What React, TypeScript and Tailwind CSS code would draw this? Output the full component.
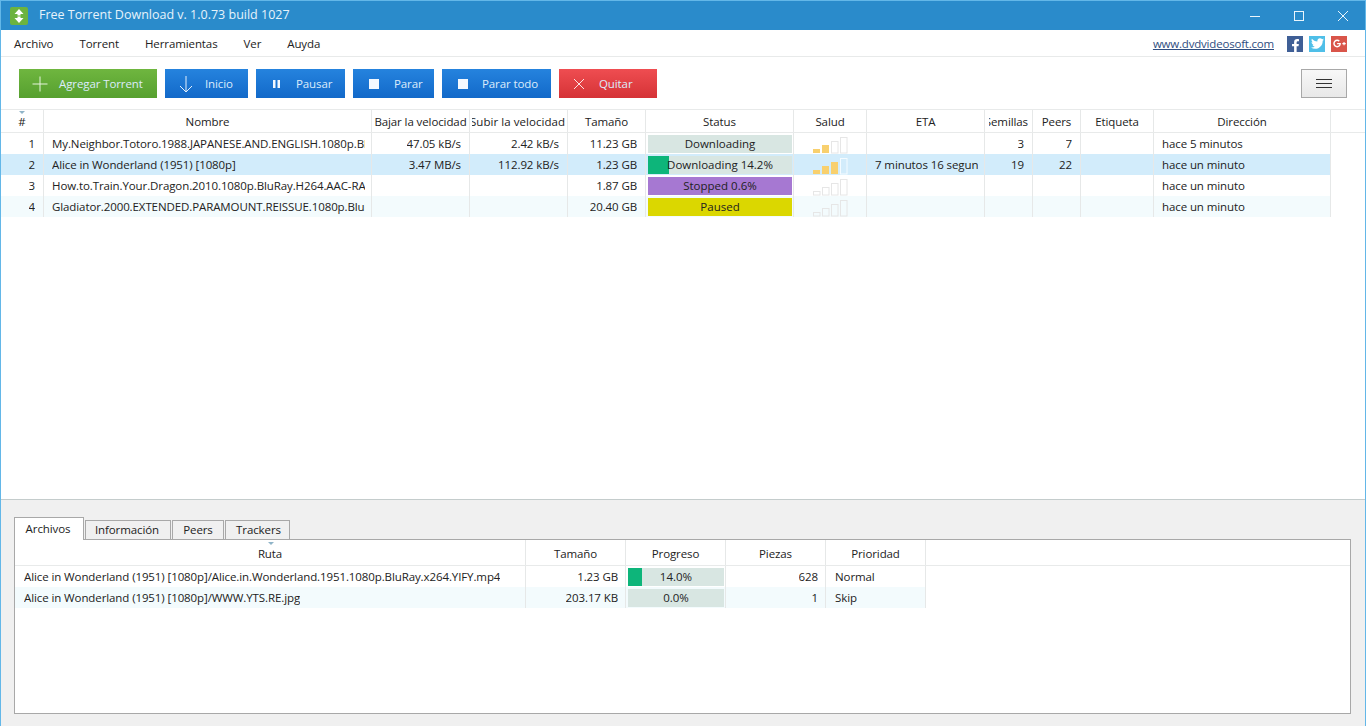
import React from "react";
import { FaFacebookF, FaTwitter, FaGooglePlusG } from "react-icons/fa";

const cols = "grid grid-cols-[43px_328px_98px_98px_78px_148px_73px_118px_48px_48px_73px_177px_1fr]";
const fileCols = "grid grid-cols-[511px_100px_100px_100px_100px_1fr]";

const Sep = "border-r border-[#e6e8e8]";

function H({ children, last }: { children?: React.ReactNode; last?: boolean }) {
  return (
    <div className={`flex justify-center items-center overflow-hidden whitespace-nowrap pt-px ${last ? "" : Sep}`}>
      {children}
    </div>
  );
}

function C({ children, right }: { children?: React.ReactNode; right?: boolean }) {
  return (
    <div className={`flex items-center overflow-hidden whitespace-nowrap ${Sep} ${right ? "justify-end pr-2" : "pl-2 pr-1.5"}`}>
      <span className="block overflow-hidden">{children}</span>
    </div>
  );
}

function F({ children, right }: { children?: React.ReactNode; right?: boolean }) {
  return (
    <div className={`flex items-center overflow-hidden whitespace-nowrap ${Sep} ${right ? "justify-end pr-[7px]" : "pl-[9px] pr-1.5"}`}>
      <span className="block overflow-hidden">{children}</span>
    </div>
  );
}

function Health({ n, bright }: { n: number; bright?: boolean }) {
  const bars = [
    [0, 12, 4],
    [9, 8, 8],
    [18, 4, 12],
    [27, 0, 16],
  ];
  return (
    <svg width="35" height="17" viewBox="0 0 35 17" className="ml-[19px] mt-[4px]">
      {bars.map(([x, y, h], i) =>
        i < n ? (
          <rect key={i} x={x} y={y} width="7" height={h} fill="#f8d06e" />
        ) : (
          <rect
            key={i}
            x={x + 0.5}
            y={y + 0.5}
            width="6.5"
            height={h - 0.5}
            fill="none"
            stroke={bright ? "#f4fbff" : "#e6e6e6"}
          />
        ),
      )}
    </svg>
  );
}

function Status({ label, bg, fill }: { label: string; bg: string; fill?: string }) {
  return (
    <div className={`${Sep} flex items-center pl-[2px] pr-px`}>
      <div className={`relative h-[18px] w-full flex items-center justify-center tracking-normal ${bg}`}>
        {fill && <div className={`absolute left-0 top-0 h-full ${fill}`} />}
        <span className="relative">{label}</span>
      </div>
    </div>
  );
}

function Btn({
  icon,
  label,
  bg,
  w,
  gap,
}: {
  icon: React.ReactNode;
  label: string;
  bg: string;
  w: string;
  gap: string;
}) {
  return (
    <button className={`h-[29px] flex items-center text-[#dcecfb] ${bg} ${w} ${gap}`}>
      {icon}
      <span>{label}</span>
    </button>
  );
}

const ic = "shrink-0";
const IPlus = (
  <svg className={ic} width="16" height="16" viewBox="0 0 16 16" stroke="#e6f4dc" fill="none">
    <path d="M8 0.5v15M0.5 8h15" />
  </svg>
);
const IDown = (
  <svg className={ic} width="14" height="18" viewBox="0 0 14 18" stroke="#e4f0fc" fill="none">
    <path d="M7 1v16M1 11l6 6 6-6" />
  </svg>
);
const IPause = (
  <svg className={ic} width="10" height="10" viewBox="0 0 10 10" fill="#f2f8ff">
    <rect x="1" y="1" width="2.5" height="8" />
    <rect x="5.5" y="1" width="2.5" height="8" />
  </svg>
);
const IStop = (
  <svg className={ic} width="10" height="10" viewBox="0 0 10 10" fill="#f4f9ff">
    <rect width="10" height="10" />
  </svg>
);
const IX = (
  <svg className={ic} width="12" height="12" viewBox="0 0 12 12" stroke="#fbe4e4" fill="none">
    <path d="M1 1l10 10M11 1L1 11" />
  </svg>
);

const green = "bg-gradient-to-b from-[#6fb63f] to-[#56a02f]";
const blue = "bg-gradient-to-b from-[#2583de] to-[#1269c9]";
const red = "bg-gradient-to-b from-[#ef4d51] to-[#d53236]";

export default function App() {
  return (
    <div
      className="h-[726px] w-full flex flex-col overflow-hidden bg-white border-x border-[#63b7e8] text-[11.5px] tracking-[-0.1px] text-[#222]"
      style={{ fontFamily: '"Open Sans", "Noto Sans", sans-serif' }}
    >
      {/* title bar */}
      <div className="h-[30px] shrink-0 flex items-center bg-[#2a8bcb] border-t border-[#63b7e8] text-[#e6f3fb]">
        <div className="ml-[9px] w-[18px] h-[18px] rounded-[2px] bg-[#6cb33f] flex items-center justify-center">
          <svg width="10" height="14" viewBox="0 0 10 14" fill="#fff">
            <path d="M5 0l4.5 5H6.5v1.5h-3V5H.5zM5 14L.5 9h3V7.5h3V9h3z" />
          </svg>
        </div>
        <div className="ml-[11px] text-[12.5px] tracking-normal">Free Torrent Download v. 1.0.73 build 1027</div>
        <div className="ml-auto flex items-center gap-[34px] mr-[17px]">
          <svg width="10" height="10" viewBox="0 0 10 10" stroke="#eaf5fc" fill="none">
            <path d="M0 5.5h10" />
          </svg>
          <svg width="10" height="10" viewBox="0 0 10 10" stroke="#eaf5fc" fill="none">
            <rect x="0.5" y="0.5" width="9" height="9" />
          </svg>
          <svg width="10" height="10" viewBox="0 0 10 10" stroke="#eaf5fc" fill="none">
            <path d="M0 0l10 10M10 0L0 10" />
          </svg>
        </div>
      </div>

      {/* menu */}
      <div className="h-[27px] shrink-0 flex items-center border-b border-[#e8eaea] pl-[13px] pr-[18px] pt-[1px]">
        <div className="flex gap-[26px]">
          <span>Archivo</span>
          <span>Torrent</span>
          <span>Herramientas</span>
          <span>Ver</span>
          <span>Auyda</span>
        </div>
        <a className="ml-auto text-[11.5px] tracking-[-0.2px] underline text-[#2f4d80]">www.dvdvideosoft.com</a>
        <div className="ml-[13px] flex gap-[6px]">
          <div className="w-4 h-4 bg-[#3f5f96] flex items-end justify-center">
            <FaFacebookF className="text-white text-[13px]" />
          </div>
          <div className="w-4 h-4 bg-[#4fbfe8] flex items-center justify-center">
            <FaTwitter className="text-white text-[13px]" />
          </div>
          <div className="w-4 h-4 bg-[#d9554a] flex items-center justify-center">
            <FaGooglePlusG className="text-white text-[13px]" />
          </div>
        </div>
      </div>

      {/* toolbar */}
      <div className="h-[53px] shrink-0 flex items-center pl-[18px] pr-[18px] pt-px gap-2 border-b border-[#e8eaea]">
        <Btn icon={IPlus} label="Agregar Torrent" bg={green} w="w-[138px] pl-[13px]" gap="gap-[11px]" />
        <Btn icon={IDown} label="Inicio" bg={blue} w="w-[83px] pl-[14px]" gap="gap-[12px]" />
        <Btn icon={IPause} label="Pausar" bg={blue} w="w-[89px] pl-[16px]" gap="gap-[14px]" />
        <Btn icon={IStop} label="Parar" bg={blue} w="w-[81px] pl-[16px]" gap="gap-[15px]" />
        <Btn icon={IStop} label="Parar todo" bg={blue} w="w-[109px] pl-[16px]" gap="gap-[14px]" />
        <Btn icon={IX} label="Quitar" bg={red} w="w-[98px] pl-[14px]" gap="gap-[14px]" />
        <button className="ml-auto w-[46px] h-[29px] border border-[#a8a8a8] bg-gradient-to-b from-[#f8f8f8] to-[#e8e8e8] flex flex-col items-center justify-center gap-[3px]">
          <span className="block w-4 h-px bg-[#333]" />
          <span className="block w-4 h-px bg-[#333]" />
          <span className="block w-4 h-px bg-[#333]" />
        </button>
      </div>

      {/* torrent table */}
      <div className="flex-1 min-h-0 flex flex-col">
        <div className={`${cols} relative h-[23px] shrink-0 border-b border-[#e8eaea]`}>
          <span className="absolute left-[18px] top-[1px] w-0 h-0 border-x-[3.5px] border-x-transparent border-t-[3px] border-t-[#8fb4c8]" />
          <H>#</H>
          <H>Nombre</H>
          <H>Bajar la velocidad</H>
          <H>
            <span className="w-[93px] overflow-hidden flex justify-end shrink-0">
              <span className="shrink-0 tracking-[0.05px]">Subir la velocidad</span>
            </span>
          </H>
          <H>Tamaño</H>
          <H>Status</H>
          <H>Salud</H>
          <H>ETA</H>
          <H>
            <span className="w-[39px] overflow-hidden flex justify-end shrink-0">
              <span className="shrink-0">Semillas</span>
            </span>
          </H>
          <H>Peers</H>
          <H>Etiqueta</H>
          <H>Dirección</H>
          <H last />
        </div>

        <div className={`${cols} h-[21px]`}>
          <C right>1</C>
          <C>My.Neighbor.Totoro.1988.JAPANESE.AND.ENGLISH.1080p.BluRay</C>
          <C right>47.05 kB/s</C>
          <C right>2.42 kB/s</C>
          <C right>11.23 GB</C>
          <Status label="Downloading" bg="bg-[#d8e6e2]" />
          <div className={Sep}><Health n={2} /></div>
          <C />
          <C right>3</C>
          <C right>7</C>
          <C />
          <C>hace 5 minutos</C>
        </div>
        <div className={`${cols} h-[21px]`}>
          <div className="contents [&>div]:bg-[#d2ecfb]">
            <C right>2</C>
            <C>Alice in Wonderland (1951) [1080p]</C>
            <C right>3.47 MB/s</C>
            <C right>112.92 kB/s</C>
            <C right>1.23 GB</C>
            <Status label="Downloading 14.2%" bg="bg-[#d8e6e2]" fill="bg-[#0db57a] w-[21px]" />
            <div className={Sep}><Health n={3} bright /></div>
            <C>7 minutos 16 segun</C>
            <C right>19</C>
            <C right>22</C>
            <C />
            <C>hace un minuto</C>
          </div>
        </div>
        <div className={`${cols} h-[21px]`}>
          <C right>3</C>
          <C>How.to.Train.Your.Dragon.2010.1080p.BluRay.H264.AAC-RARBG</C>
          <C />
          <C />
          <C right>1.87 GB</C>
          <Status label="Stopped 0.6%" bg="bg-[#a678d2]" />
          <div className={Sep}><Health n={0} /></div>
          <C />
          <C />
          <C />
          <C />
          <C>hace un minuto</C>
        </div>
        <div className={`${cols} h-[21px]`}>
          <div className="contents [&>div]:bg-[#f3fbfd]">
            <C right>4</C>
            <C>Gladiator.2000.EXTENDED.PARAMOUNT.REISSUE.1080p.BluRay.x264</C>
            <C />
            <C />
            <C right>20.40 GB</C>
            <Status label="Paused" bg="bg-[#dbd700]" />
            <div className={Sep}><Health n={0} /></div>
            <C />
            <C />
            <C />
            <C />
            <C>hace un minuto</C>
          </div>
        </div>
      </div>

      {/* bottom pane */}
      <div className="h-[227px] shrink-0 bg-[#f0f0f0] border-t border-[#c4cccc] pl-[13px] pr-[14px] pb-[12px] pt-[17px] flex flex-col">
        <div className="flex items-end h-[23px] shrink-0 gap-px relative -mb-px z-10">
          <div className="h-[23px] w-[70px] bg-white border border-b-0 border-[#a8a8a8] flex items-center justify-center pr-[2px]">Archivos</div>
          <div className="h-[20px] w-[86px] bg-[#f0f0f0] border border-[#a8a8a8] flex items-center justify-center pr-[2px]">Información</div>
          <div className="h-[20px] w-[52px] bg-[#f0f0f0] border border-[#a8a8a8] flex items-center justify-center">Peers</div>
          <div className="h-[20px] w-[65px] bg-[#f0f0f0] border border-[#a8a8a8] flex items-center justify-center pl-[2px]">Trackers</div>
        </div>
        <div className="flex-1 min-h-0 bg-white border border-[#a8a8a8]">
          <div className={`${fileCols} relative h-[26px] border-b border-[#e8eaea]`}>
            <span className="absolute left-[253px] top-[2px] w-0 h-0 border-x-[3.5px] border-x-transparent border-t-[3px] border-t-[#8fb4c8]" />
            <H><span className="pt-[2px]">Ruta</span></H>
            <H><span className="pt-[2px]">Tamaño</span></H>
            <H><span className="pt-[2px]">Progreso</span></H>
            <H><span className="pt-[2px]">Piezas</span></H>
            <H><span className="pt-[2px]">Prioridad</span></H>
            <H last />
          </div>
          <div className={`${fileCols} h-[21px]`}>
            <F>Alice in Wonderland (1951) [1080p]/Alice.in.Wonderland.1951.1080p.BluRay.x264.YIFY.mp4</F>
            <F right>1.23 GB</F>
            <Status label="14.0%" bg="bg-[#d8e6e2]" fill="bg-[#0db57a] w-[14px]" />
            <F right>628</F>
            <F>Normal</F>
          </div>
          <div className={`${fileCols} h-[21px]`}>
            <div className="contents [&>div]:bg-[#f3fbfd]">
              <F>Alice in Wonderland (1951) [1080p]/WWW.YTS.RE.jpg</F>
              <F right>203.17 KB</F>
              <Status label="0.0%" bg="bg-[#d8e6e2]" />
              <F right>1</F>
              <F>Skip</F>
            </div>
          </div>
        </div>
      </div>
    </div>
  );
}
